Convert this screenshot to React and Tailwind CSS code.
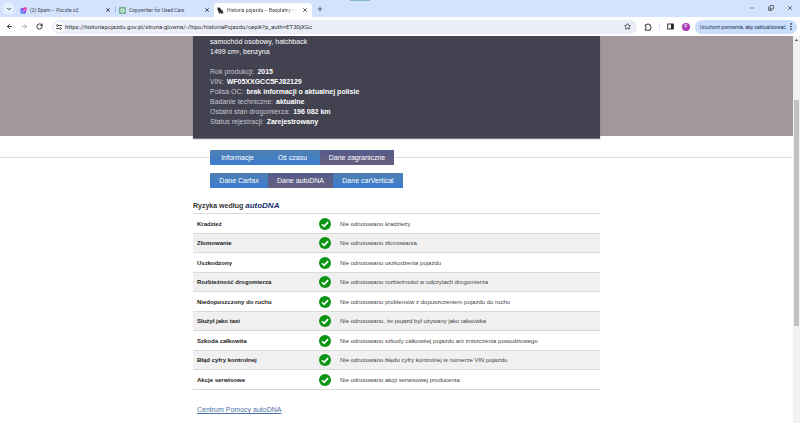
import clsx from "clsx";
import { ArrowLeft, ArrowRight, ChevronDown, Copy, Minus, Plus, RotateCw, Star, X } from "lucide-react";

const vehicle = [
  { label: "Rok produkcji", value: "2015" },
  { label: "VIN", value: "WF05XXGCC5FJ82129" },
  { label: "Polisa OC", value: "brak informacji o aktualnej polisie" },
  { label: "Badanie techniczne", value: "aktualne" },
  { label: "Ostatni stan drogomierza", value: "196 082 km" },
  { label: "Status rejestracji", value: "Zarejestrowany" },
];

const risks = [
  { name: "Kradzież", result: "Nie odnotowano kradzieży" },
  { name: "Złomowanie", result: "Nie odnotowano złomowania" },
  { name: "Uszkodzony", result: "Nie odnotowano uszkodzenia pojazdu" },
  { name: "Rozbieżność drogomierza", result: "Nie odnotowano rozbieżności w odczytach drogomierza" },
  { name: "Niedopuszczony do ruchu", result: "Nie odnotowano problemów z dopuszczeniem pojazdu do ruchu" },
  { name: "Służył jako taxi", result: "Nie odnotowano, że pojazd był używany jako taksówka" },
  { name: "Szkoda całkowita", result: "Nie odnotowano szkody całkowitej pojazdu ani zniszczenia powodziowego" },
  { name: "Błąd cyfry kontrolnej", result: "Nie odnotowano błędu cyfry kontrolnej w numerze VIN pojazdu" },
  { name: "Akcje serwisowe", result: "Nie odnotowano akcji serwisowej producenta" },
];

function MailIcon() {
  return (
    <svg viewBox="0 0 14 14" className="size-[7px] shrink-0">
      <rect x="1" y="2" width="11" height="11" rx="3" fill="#7b4df0" />
      <path d="M1 9c3-1 5 1 6 4H4a3 3 0 0 1-3-3z" fill="#3fa2f5" />
      <circle cx="10" cy="4" r="4" fill="#e84bb5" />
      <path d="M3 7l3 2 4-3" stroke="#fff" strokeWidth="1.2" fill="none" />
    </svg>
  );
}

function GptIcon() {
  return (
    <svg viewBox="0 0 14 14" className="size-[7px] shrink-0">
      <rect width="14" height="14" rx="2" fill="#6fb08e" />
      <g stroke="#e9f7ef" strokeWidth="1" fill="none">
        <ellipse cx="7" cy="7" rx="2.2" ry="4.6" />
        <ellipse cx="7" cy="7" rx="2.2" ry="4.6" transform="rotate(60 7 7)" />
        <ellipse cx="7" cy="7" rx="2.2" ry="4.6" transform="rotate(120 7 7)" />
      </g>
    </svg>
  );
}

function HistoryIcon() {
  return (
    <svg viewBox="0 0 14 14" className="size-[7px] shrink-0">
      <path d="M1 1h4l2 2 1 2 3 2 1 3 1 3H8l-1-2-1 2H4l-1-4-2-3z" fill="#222" />
      <path d="M3 8l4-1M5 11l5-2" stroke="#777" strokeWidth=".7" />
    </svg>
  );
}

function BrowserTab({ icon, title, active }) {
  return (
    <div
      className={clsx(
        "flex h-[14px] w-[98px] items-center gap-[3px] pr-[4px] pl-[3px]",
        active && "rounded-t-[4px] bg-white"
      )}
    >
      {icon}
      <span className={clsx("whitespace-nowrap", active && "mask-r-from-85% mask-r-to-100%")}>{title}</span>
      <button type="button" aria-label="Zamknij kartę" className="ml-auto">
        <X className="size-[6px] text-[#222]" strokeWidth={3} />
      </button>
    </div>
  );
}

function TabStrip() {
  return (
    <div className="relative flex h-[17px] items-end bg-[#d3e3fd] font-[Roboto,'Open_Sans',sans-serif] text-[5px] leading-[8px] text-[#3c424d]">
      <div className="absolute top-0 left-[350px] h-px w-[20px] bg-[#7fb9d6]" />
      <button type="button" aria-label="Szukaj kart" className="mb-[3px] ml-[3px] flex size-[11px] items-center justify-center rounded-[4px] bg-[#e6effd]">
        <ChevronDown className="size-[6px] text-[#222]" strokeWidth={3.5} />
      </button>
      <div className="ml-[3px] flex flex-1 items-end">
        <BrowserTab icon={<MailIcon />} title="(2) Spam – Poczta o2" />
        <div className="mb-[5px] h-[6px] w-px bg-[#a5bfe8]" />
        <BrowserTab icon={<GptIcon />} title="Copywriter for Used Cars" />
        <BrowserTab icon={<HistoryIcon />} title="Historia pojazdu – Bezpłatny ra" active />
        <button type="button" aria-label="Nowa karta" className="mb-[5px] ml-[5px]">
          <Plus className="size-[6px] text-[#222]" strokeWidth={2.5} />
        </button>
      </div>
      <div className="mb-[6px] flex items-center gap-[13px] pr-[7px] text-[#222]">
        <button type="button" aria-label="Minimalizuj"><Minus className="size-[6px]" /></button>
        <button type="button" aria-label="Przywróć"><Copy className="size-[6px] -scale-x-100 rotate-180" strokeWidth={2.5} /></button>
        <button type="button" aria-label="Zamknij"><X className="size-[6px]" strokeWidth={2.5} /></button>
      </div>
    </div>
  );
}

function Toolbar() {
  return (
    <div className="flex h-[19px] items-center bg-white pr-[3px] pl-[6px] font-[Roboto,'Open_Sans',sans-serif] leading-[8px] text-[#333]">
      <button type="button" aria-label="Wstecz"><ArrowLeft className="size-[7px] text-[#222]" strokeWidth={3} /></button>
      <button type="button" aria-label="Dalej" className="ml-[8px]"><ArrowRight className="size-[7px] text-[#999]" strokeWidth={2.5} /></button>
      <button type="button" aria-label="Odśwież" className="ml-[8px]"><RotateCw className="size-[7px] text-[#222]" strokeWidth={3} /></button>
      <div className="ml-[9px] flex h-[14px] flex-1 items-center rounded-full bg-[#ebeef8] pr-[6px] pl-[2px]">
        <button type="button" aria-label="Informacje o witrynie" className="flex size-[10px] shrink-0 items-center justify-center rounded-full bg-white">
          <svg viewBox="0 0 12 12" className="size-[6px]" fill="none" stroke="#222" strokeWidth="1.6">
            <circle cx="3" cy="3" r="1.8" />
            <path d="M6 3h6M0 9h6" />
            <circle cx="9" cy="9" r="1.8" />
          </svg>
        </button>
        <input
          aria-label="Adres strony"
          className="ml-[1px] min-w-0 flex-1 bg-transparent text-[6px] outline-none"
          defaultValue="https://historiapojazdu.gov.pl/strona-glowna/-/hipo/historiaPojazdu/cepik?p_auth=ET30jXGc"
        />
        <button type="button" aria-label="Dodaj zakładkę"><Star className="size-[7px] text-[#222]" strokeWidth={2.5} /></button>
      </div>
      <button type="button" aria-label="Rozszerzenia" className="ml-[7px]">
        <svg viewBox="0 0 16 16" className="size-[8px]" fill="none" stroke="#222" strokeWidth="1.8">
          <path d="M2.500 3.500H6a2 2 0 0 1 4 0h2.500V7a2 2 0 0 1 0 4v3.500h-10V11a2 2 0 0 0 0-4z" strokeLinejoin="round" />
        </svg>
      </button>
      <div className="ml-[7px] h-[7px] w-px bg-[#d3e3fd]" />
      <button type="button" aria-label="Panel boczny" className="ml-[7px]">
        <svg viewBox="0 0 14 14" className="size-[7px]">
          <rect x="1.5" y="2" width="11" height="10" fill="none" stroke="#222" strokeWidth="1.8" />
          <path d="M8 2h5v10H8z" fill="#222" />
        </svg>
      </button>
      <button type="button" aria-label="Profil" className="ml-[8px] flex size-[8px] items-center justify-center rounded-full bg-[#a63bb5] text-[5px] leading-none text-white">
        P
      </button>
      <button type="button" className="ml-[5px] flex h-[14px] items-center gap-[4px] rounded-full bg-[#c9defc] pr-[5px] pl-[5px] text-[5px] whitespace-nowrap text-[#1d2b45]">
        Uruchom ponownie, aby zaktualizować
        <svg viewBox="0 0 2 8" className="h-[7px] w-[2px]" fill="#222">
          <circle cx="1" cy="1" r=".9" />
          <circle cx="1" cy="4" r=".9" />
          <circle cx="1" cy="7" r=".9" />
        </svg>
      </button>
    </div>
  );
}

function NavTab({ children, active, className }) {
  return (
    <button
      type="button"
      className={clsx(
        "h-[15px] text-center text-[7px] leading-[15px] whitespace-nowrap text-white",
        active ? "bg-linear-to-b from-[#555b8c] to-[#67607f]" : "bg-linear-to-b from-[#4e80b0] to-[#3b7bd0]",
        className
      )}
    >
      {children}
    </button>
  );
}

function CheckIcon() {
  return (
    <svg viewBox="0 0 24 24" className="block size-[12px]" role="img" aria-label="OK">
      <circle cx="12" cy="12" r="12" fill="#0b9413" />
      <path d="M6 12.5l4.3 4.2L18.2 8.2" fill="none" stroke="#fff" strokeWidth="3.4" />
    </svg>
  );
}

function RiskTable() {
  return (
    <table className="w-full border-collapse border-t border-[#dcdcdc] text-left text-[6px] leading-[8px] text-[#444]">
      <tbody>
        {risks.map((risk) => (
          <tr key={risk.name} className="h-[20px] border-b border-[#d9d9d9] even:h-[19px] even:bg-[#f0f0f0]">
            <th scope="row" className="w-[126px] p-0 pl-[4px] font-bold text-[#222]">{risk.name}</th>
            <td className="w-[21px] p-0"><CheckIcon /></td>
            <td className="p-0">{risk.result}</td>
          </tr>
        ))}
      </tbody>
    </table>
  );
}

function Scrollbar() {
  return (
    <div className="flex w-[7px] shrink-0 flex-col items-center bg-[#f1f1f1]">
      <svg viewBox="0 0 6 4" className="mt-[3px] h-[2px] w-[3px]">
        <path d="M0 4l3-4 3 4z" fill="#444" />
      </svg>
      <div className="mt-[59px] h-[226px] w-[5px] bg-[#c1c1c1]" />
    </div>
  );
}

export default function App() {
  return (
    <div className="flex min-h-screen flex-col bg-white font-['Liberation_Sans',Arial,sans-serif]">
      <header>
        <TabStrip />
        <Toolbar />
      </header>
      <div className="flex flex-1">
        <main className="min-w-0 flex-1">
          <section className="flex justify-center bg-[#a2979c]">
            <div className="-mb-[2px] w-full max-w-[407px] bg-[#424251] pt-[1px] pb-[11px] pl-[17px] text-[7px] leading-[10px] text-[#c6c7d0] shadow-[0_1px_1px_#777]">
              <p className="text-white">samochód osobowy, hatchback</p>
              <p className="text-white">1499 cm³, benzyna</p>
              <dl className="pt-[10px]">
                {vehicle.map((item) => (
                  <div key={item.label} className="flex gap-[3px]">
                    <dt>{item.label}:</dt>
                    <dd className="font-bold text-white">{item.value}</dd>
                  </div>
                ))}
              </dl>
            </div>
          </section>

          <nav aria-label="Sekcje raportu" className="mt-[14px] flex items-center">
            <div className="h-px flex-1 bg-[#dedede]" />
            <div className="flex w-full max-w-[407px] items-center">
              <div className="h-px w-[17px] bg-[#dedede]" />
              <NavTab className="w-[55px] rounded-l-[1px]">Informacje</NavTab>
              <NavTab className="w-[55px]">Oś czasu</NavTab>
              <NavTab active className="w-[74px]">Dane zagraniczne</NavTab>
              <div className="h-px flex-1 bg-[#dedede]" />
            </div>
            <div className="h-px flex-1 bg-[#dedede]" />
          </nav>

          <div className="mx-auto w-full max-w-[407px]">
            <nav aria-label="Źródła danych" className="mt-[8px] flex pl-[17px]">
              <NavTab className="w-[58px] rounded-l-[1px]">Dane Carfax</NavTab>
              <NavTab active className="w-[65px]">Dane autoDNA</NavTab>
              <NavTab className="w-[70px]">Dane carVertical</NavTab>
            </nav>
            <h2 className="mt-[13px] mb-[2px] flex items-center gap-[2px] text-[7px] leading-[10px] font-bold text-[#333]">
              Ryzyka według
              <span className="text-[8px] text-[#1b2f6b] italic">autoDNA</span>
            </h2>
            <RiskTable />
            <a href="#pomoc" className="mt-[15px] ml-[4px] inline-block text-[7px] leading-[10px] text-[#4a72a8] underline">
              Centrum Pomocy autoDNA
            </a>
          </div>
        </main>
        <Scrollbar />
      </div>
    </div>
  );
}
